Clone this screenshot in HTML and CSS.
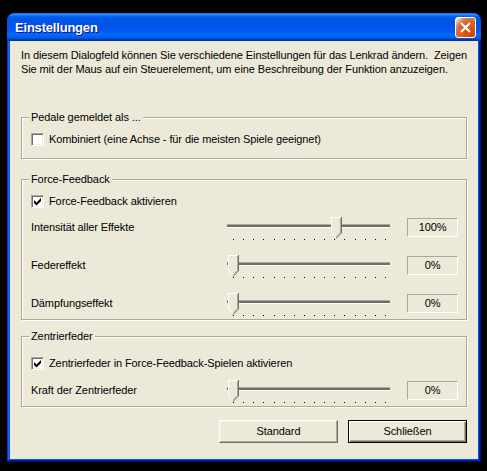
FILE: index.html
```html
<!DOCTYPE html>
<html>
  <head>
    <meta http-equiv="Content-Type" content="text/html; charset=utf-8"/>
    <title>Einstellungen</title>
    <link rel="stylesheet" href="styles.css">
  </head>
  <body>
  <div class="window">

    <div class="titlebar">
      <span class="title">Einstellungen</span>
      <span class="close">
        <svg width="19" height="19" viewBox="0 0 19 19"><path d="M5 5 L14 14 M14 5 L5 14" stroke="#fff" stroke-width="2" fill="none"/></svg>
      </span>
    </div>

    <div class="client">
      <p class="intro">In diesem Dialogfeld können Sie verschiedene Einstellungen für das Lenkrad ändern.&nbsp; Zeigen<br/>Sie mit der Maus auf ein Steuerelement, um eine Beschreibung der Funktion anzuzeigen.</p>

      <!-- Pedale -->
      <div class="group group_pedale">
        <div class="group_title">Pedale gemeldet als ...</div>
        <div class="check_row">
          <span class="check"></span>
          <span>Kombiniert (eine Achse - für die meisten Spiele geeignet)</span>
        </div>
      </div>

      <!-- Force-Feedback -->
      <div class="group group_ff">
        <div class="group_title">Force-Feedback</div>
        <div class="check_row">
          <span class="check"><svg width="11" height="11" viewBox="0 0 11 11"><polygon points="2,4 4.5,6.5 9,2 9,5 4.5,9.5 2,7" fill="#000"/></svg></span>
          <span>Force-Feedback aktivieren</span>
        </div>

        <div class="slider_row">
          <div class="slider_label">Intensität aller Effekte</div>
          <div class="slider">
            <div class="track_area">
              <div class="track"></div>
              <svg class="thumb" style="left: 104px" width="11" height="22" viewBox="0 0 11 22"><polygon points="0.5,0.5 9.5,0.5 9.5,15.5 5,20 0.5,15.5" fill="#ECE9D8"/><polyline points="0.5,16 0.5,0.5 10,0.5" stroke="#fff" fill="none"/><polyline points="9.5,1 9.5,15.5 5,20" stroke="#ACA899" fill="none"/><polyline points="10.5,0 10.5,16 5,21.5" stroke="#716F64" fill="none"/><polyline points="1,16 5,20" stroke="#fff" fill="none"/></svg>
            </div>
            <div class="ticks">
              <i></i><i></i><i></i><i></i><i></i><i></i><i></i><i></i><i></i><i></i><i></i><i></i><i></i><i></i><i></i><i></i>
            </div>
          </div>
          <div class="value">100%</div>
        </div>

        <div class="slider_row">
          <div class="slider_label">Federeffekt</div>
          <div class="slider">
            <div class="track_area">
              <div class="track"></div>
              <svg class="thumb" style="left: 1px" width="11" height="22" viewBox="0 0 11 22"><polygon points="0.5,0.5 9.5,0.5 9.5,15.5 5,20 0.5,15.5" fill="#ECE9D8"/><polyline points="0.5,16 0.5,0.5 10,0.5" stroke="#fff" fill="none"/><polyline points="9.5,1 9.5,15.5 5,20" stroke="#ACA899" fill="none"/><polyline points="10.5,0 10.5,16 5,21.5" stroke="#716F64" fill="none"/><polyline points="1,16 5,20" stroke="#fff" fill="none"/></svg>
            </div>
            <div class="ticks">
              <i></i><i></i><i></i><i></i><i></i><i></i><i></i><i></i><i></i><i></i><i></i><i></i><i></i><i></i><i></i><i></i>
            </div>
          </div>
          <div class="value">0%</div>
        </div>

        <div class="slider_row">
          <div class="slider_label">Dämpfungseffekt</div>
          <div class="slider">
            <div class="track_area">
              <div class="track"></div>
              <svg class="thumb" style="left: 1px" width="11" height="22" viewBox="0 0 11 22"><polygon points="0.5,0.5 9.5,0.5 9.5,15.5 5,20 0.5,15.5" fill="#ECE9D8"/><polyline points="0.5,16 0.5,0.5 10,0.5" stroke="#fff" fill="none"/><polyline points="9.5,1 9.5,15.5 5,20" stroke="#ACA899" fill="none"/><polyline points="10.5,0 10.5,16 5,21.5" stroke="#716F64" fill="none"/><polyline points="1,16 5,20" stroke="#fff" fill="none"/></svg>
            </div>
            <div class="ticks">
              <i></i><i></i><i></i><i></i><i></i><i></i><i></i><i></i><i></i><i></i><i></i><i></i><i></i><i></i><i></i><i></i>
            </div>
          </div>
          <div class="value">0%</div>
        </div>
      </div>

      <!-- Zentrierfeder -->
      <div class="group group_zf">
        <div class="group_title">Zentrierfeder</div>
        <div class="check_row">
          <span class="check"><svg width="11" height="11" viewBox="0 0 11 11"><polygon points="2,4 4.5,6.5 9,2 9,5 4.5,9.5 2,7" fill="#000"/></svg></span>
          <span>Zentrierfeder in Force-Feedback-Spielen aktivieren</span>
        </div>

        <div class="slider_row">
          <div class="slider_label">Kraft der Zentrierfeder</div>
          <div class="slider">
            <div class="track_area">
              <div class="track"></div>
              <svg class="thumb" style="left: 1px" width="11" height="22" viewBox="0 0 11 22"><polygon points="0.5,0.5 9.5,0.5 9.5,15.5 5,20 0.5,15.5" fill="#ECE9D8"/><polyline points="0.5,16 0.5,0.5 10,0.5" stroke="#fff" fill="none"/><polyline points="9.5,1 9.5,15.5 5,20" stroke="#ACA899" fill="none"/><polyline points="10.5,0 10.5,16 5,21.5" stroke="#716F64" fill="none"/><polyline points="1,16 5,20" stroke="#fff" fill="none"/></svg>
            </div>
            <div class="ticks">
              <i></i><i></i><i></i><i></i><i></i><i></i><i></i><i></i><i></i><i></i><i></i><i></i><i></i><i></i><i></i><i></i>
            </div>
          </div>
          <div class="value">0%</div>
        </div>
      </div>

      <div class="buttons">
        <div class="button">Standard</div>
        <div class="button default">Schließen</div>
      </div>
    </div>

  </div>
  </body>
</html>
```

FILE: styles.css
```css
html, body { margin: 0; padding: 0; background: #000; }
body { width: 487px; height: 471px; overflow: hidden; font-family: "Liberation Sans", Arial, sans-serif; font-size: 11px; letter-spacing: -0.1px; color: #000; }

/* window frame */
.window {
  margin: 13px 0 0 7px;
  width: 474px;
  height: 449px;
  box-sizing: border-box;
  border-radius: 8px 8px 0 0;
  background: #0055E5;
  box-shadow: inset -1px -1px #00138C, inset 1px 1px #0831D9, inset -2px -2px #001EA0, inset 2px 2px #166AEE;
  overflow: hidden;
}

.titlebar {
  height: 28px;
  display: flex;
  align-items: center;
  justify-content: space-between;
  padding: 0 5px 0 8px;
  border-radius: 8px 8px 0 0;
  background: linear-gradient(#0058EE 0%, #3A93FF 4%, #288EFF 6%, #127DFF 8%, #036FFC 10%, #0262EE 14%, #0057E5 20%, #0054E3 24%, #0055EB 56%, #005BF5 66%, #026AFE 76%, #0062EF 86%, #0052D6 92%, #0040AB 94%, #003092 100%);
}
.title { color: #fff; font-weight: bold; font-size: 13px; letter-spacing: -0.2px; text-shadow: 1px 1px #0F1089; margin-top: 1px; }
.close {
  width: 21px; height: 21px;
  box-sizing: border-box;
  border: 1px solid #fff;
  border-radius: 3px;
  margin-top: 1px;
  background: radial-gradient(circle at 90% 90%, #CC4600 0%, #DC6527 55%, #CD7546 70%, #FFCCB2 90%, #fff 100%);
  display: flex;
}

.client {
  margin: 0 3px 3px 3px;
  height: 418px;
  background: #ECE9D8;
  padding: 7px 11px 0 11px;
  box-sizing: border-box;
}

p.intro { margin: 0; line-height: 14px; white-space: nowrap; }

/* classic etched group box */
.group {
  border: 1px solid #ACA899;
  box-shadow: inset 1px 1px #fff, 1px 1px #fff;
  padding: 0 8px 2px 9px;
}
.group_title { margin: -7px 0 0 -2px; padding: 0 2px; width: max-content; background: #ECE9D8; line-height: 13px; }
.group_pedale { margin-top: 41px; padding-bottom: 12px; }
.group_ff { margin-top: 20px; }
.group_zf { margin-top: 16px; }

.check_row { display: flex; align-items: center; height: 13px; margin-top: 9px; line-height: 13px; white-space: nowrap; }
.group_zf .check_row { margin-top: 14px; }
.check {
  width: 13px; height: 13px;
  box-sizing: border-box;
  border: 1px solid;
  border-color: #ACA899 #fff #fff #ACA899;
  box-shadow: inset 1px 1px #716F64, inset -1px -1px #F1EFE2;
  background: #fff;
  margin-right: 5px;
  flex: none;
}
.check svg { display: block; }

/* trackbar rows */
.slider_row { display: flex; margin-top: 14px; }
.check_row + .slider_row { margin-top: 9px; }
.group_zf .check_row + .slider_row { margin-top: 10px; }
.slider_label { width: 196px; line-height: 20px; }
.slider { width: 163px; }
.track_area { position: relative; height: 21px; }
.track {
  position: absolute; left: 0; right: 0; top: 7px;
  height: 2px;
  border-top: 1px solid #ACA899;
  border-bottom: 1px solid #fff;
  background: #716F64;
}
.thumb { position: absolute; top: 0; display: block; }
.ticks { display: flex; justify-content: space-between; width: 153px; margin: 1px 0 0 6px; height: 2px; }
.ticks i { width: 1px; height: 1px; background: #000; }

.value {
  margin-left: auto;
  margin-top: 1px;
  width: 51px; height: 19px;
  box-sizing: border-box;
  border: 1px solid;
  border-color: #ACA899 #fff #fff #ACA899;
  text-align: center;
  line-height: 17px;
}

/* buttons */
.buttons { display: flex; justify-content: flex-end; gap: 10px; margin-top: 13px; }
.button {
  width: 119px; height: 23px;
  box-sizing: border-box;
  border: 1px solid;
  border-color: #fff #716F64 #716F64 #fff;
  box-shadow: inset -1px -1px #ACA899, inset 1px 1px #F1EFE2;
  text-align: center;
  line-height: 21px;
}
.button.default { border: 1px solid #000; box-shadow: inset 1px 1px #fff, inset -1px -1px #716F64, inset -2px -2px #ACA899; }
```
